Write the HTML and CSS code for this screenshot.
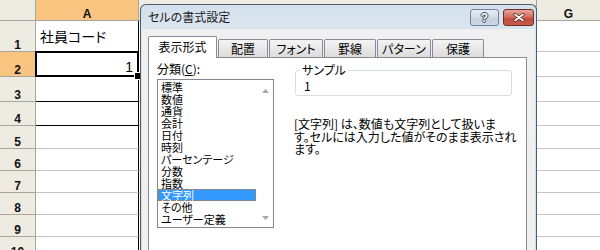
FILE: index.html
```html
<!DOCTYPE html>
<html lang="ja">
<head>
<meta charset="utf-8">
<title>セルの書式設定</title>
<link rel="stylesheet" href="styles.css">
</head>
<body>
<div class="screen">
  <div class="sheet">
    <div class="hdr corner"></div>
    <div class="hdr sel">A</div>
    <div class="hdr"></div>
    <div class="hdr">G</div>

    <div class="hdr">1</div>
    <div class="cell a boxed jp">社員コード</div>
    <div class="cell"></div>
    <div class="cell"></div>

    <div class="hdr sel">2</div>
    <div class="cell a boxed num active">1</div>
    <div class="cell"></div>
    <div class="cell"></div>

    <div class="hdr">3</div>
    <div class="cell a boxed"></div>
    <div class="cell"></div>
    <div class="cell"></div>

    <div class="hdr">4</div>
    <div class="cell a boxed"></div>
    <div class="cell"></div>
    <div class="cell"></div>

    <div class="hdr">5</div>
    <div class="cell a"></div>
    <div class="cell"></div>
    <div class="cell"></div>

    <div class="hdr">6</div>
    <div class="cell a"></div>
    <div class="cell"></div>
    <div class="cell"></div>

    <div class="hdr">7</div>
    <div class="cell a"></div>
    <div class="cell"></div>
    <div class="cell"></div>

    <div class="hdr">8</div>
    <div class="cell a"></div>
    <div class="cell"></div>
    <div class="cell"></div>

    <div class="hdr">9</div>
    <div class="cell a"></div>
    <div class="cell"></div>
    <div class="cell"></div>

    <div class="hdr">10</div>
    <div class="cell a"></div>
    <div class="cell"></div>
    <div class="cell"></div>
  </div>

  <div class="dialog">
    <div class="titlebar">
      <span class="title">セルの書式設定</span>
      <div class="tbtns">
        <span class="tbtn help">?</span>
        <span class="tbtn close">
          <svg width="12" height="9" viewBox="0 0 12 9">
            <path d="M2 1.5 L10 7.5 M10 1.5 L2 7.5" stroke="#5a2a24" stroke-width="3.2" stroke-linecap="round" fill="none"/>
            <path d="M2 1.5 L10 7.5 M10 1.5 L2 7.5" stroke="#ffffff" stroke-width="1.6" stroke-linecap="round" fill="none"/>
          </svg>
        </span>
      </div>
    </div>
    <div class="dbody">
      <div class="tabs">
        <span class="tab active w-a">表示形式</span>
        <span class="tab w-b">配置</span>
        <span class="tab w-c">フォント</span>
        <span class="tab w-d">罫線</span>
        <span class="tab w-c">パターン</span>
        <span class="tab w-d">保護</span>
      </div>
      <div class="panel">
        <div class="leftcol">
          <div class="lbl">分類(<u>C</u>):</div>
          <div class="listbox">
            <ul class="items">
              <li>標準</li>
              <li>数値</li>
              <li>通貨</li>
              <li>会計</li>
              <li>日付</li>
              <li>時刻</li>
              <li>パーセンテージ</li>
              <li>分数</li>
              <li>指数</li>
              <li class="selected">文字列</li>
              <li>その他</li>
              <li>ユーザー定義</li>
            </ul>
            <div class="vscroll">
              <svg width="7" height="4" viewBox="0 0 7 4"><polygon points="0,4 7,4 3.5,0" fill="#a8a8a8"/></svg>
              <svg width="7" height="4" viewBox="0 0 7 4"><polygon points="0,0 7,0 3.5,4" fill="#a8a8a8"/></svg>
            </div>
          </div>
        </div>
        <div class="rightcol">
          <fieldset class="sample">
            <legend>サンプル</legend>
            <div class="sval">1</div>
          </fieldset>
          <p class="desc">[文字列] は、数値も文字列として扱いま<br>す。セルには入力した値がそのまま表示され<br>ます。</p>
        </div>
      </div>
    </div>
  </div>
</div>
</body>
</html>
```

FILE: styles.css
```css
* { box-sizing: border-box; }
html, body { margin: 0; padding: 0; }
body {
  width: 600px;
  height: 250px;
  overflow: hidden;
  background: #ffffff;
  font-family: "Noto Sans CJK JP", sans-serif;
}
.screen {
  position: relative;
  width: 600px;
  height: 250px;
  overflow: hidden;
}

/* ---------- spreadsheet ---------- */
.sheet {
  display: grid;
  grid-template-columns: 36px 103px 398px 64px;
  grid-template-rows: 21px 31px 25px 25px 24px 23px 22px 22px 22px 22px 22px;
}
.hdr {
  background: #eeebe2;
  border-right: 1px solid #a9a79c;
  border-bottom: 1px solid #a9a79c;
  display: flex;
  align-items: flex-end;
  justify-content: center;
  font: bold 12px/12px "Liberation Sans", sans-serif;
  color: #111;
}
.hdr.sel { background: #f8c480; }
.cell {
  border-right: 1px solid #c4c4c4;
  border-bottom: 1px solid #c4c4c4;
  display: flex;
  align-items: center;
  padding: 0 4px;
  color: #000;
}
.cell.a { border-right-color: #000; }
.cell.boxed { border-bottom-color: #000; }
.cell.jp {
  font: 14px/14px "Noto Sans CJK JP", sans-serif;
  font-feature-settings: "palt";
}
.cell.num {
  justify-content: flex-end;
  align-items: flex-end;
  font: 14px/14px "Liberation Sans", sans-serif;
  padding: 0 5px 2px 4px;
}
.cell.active { position: relative; }
.cell.active::after {
  content: "";
  position: absolute;
  left: -1px;
  top: -1px;
  right: -1px;
  bottom: -1px;
  border: 2px solid #000;
}
.cell.active::before {
  content: "";
  position: absolute;
  right: -4px;
  bottom: -4px;
  width: 6px;
  height: 6px;
  background: #000;
  border: 1px solid #fff;
  z-index: 1;
}

/* ---------- dialog ---------- */
.dialog {
  position: absolute;
  left: 140px;
  top: 4px;
  width: 397px;
  height: 262px;
  border: 1px solid #4e5b69;
  border-bottom: none;
  border-radius: 6px 6px 0 0;
  background: linear-gradient(#d4e0ed, #dbe5f0 24px, #cfdbe8);
  padding: 0 1px;
  display: flex;
  flex-direction: column;
  font: 12px/14px "Noto Sans CJK JP", sans-serif;
  font-feature-settings: "palt";
  color: #000;
  z-index: 2;
}
.titlebar {
  height: 24px;
  flex: none;
  display: flex;
  justify-content: space-between;
  align-items: flex-start;
  padding: 4px 1px 0 6px;
}
.title {
  margin-top: 1px;
  color: #1a1a1a;
}
.tbtns {
  display: flex;
  gap: 4px;
}
.tbtn {
  height: 17px;
  border-radius: 3px;
  display: flex;
  align-items: center;
  justify-content: center;
}
.tbtn.help {
  width: 29px;
  border: 1px solid #6f8196;
  background: linear-gradient(#e6edf5, #d2dde9 50%, #c3d1e0 51%, #cbd8e6);
  color: #fff;
  font: bold 12px/12px "Liberation Sans", sans-serif;
  text-shadow: 0 0 1px #3b4a5c, 1px 0 0 #3b4a5c, -1px 0 0 #3b4a5c, 0 1px 0 #3b4a5c, 0 -1px 0 #3b4a5c;
}
.tbtn.close {
  width: 31px;
  border: 1px solid #6d2c25;
  background: linear-gradient(#e5a89e, #d0685c 50%, #c24a3c 51%, #c95a48);
}

.dbody {
  flex: 1;
  display: flex;
  flex-direction: column;
  background: #f0f0f0;
  padding: 7px 8px 0 6px;
}
.tabs {
  display: flex;
  align-items: flex-end;
  gap: 1px;
  height: 21px;
  flex: none;
}
.tab {
  height: 18px;
  border: 1px solid #898c95;
  border-bottom: none;
  border-radius: 2px 2px 0 0;
  background: linear-gradient(#f4f4f4, #e8e8e8 50%, #dcdcdc);
  display: flex;
  justify-content: center;
  padding-top: 2px;
  white-space: nowrap;
}
.tab.active {
  height: 22px;
  margin-bottom: -1px;
  background: #ffffff;
  position: relative;
  z-index: 1;
  padding-top: 3px;
}
.w-a { width: 69px; }
.w-b { width: 50px; }
.w-c { width: 54px; }
.w-d { width: 52px; }

.panel {
  flex: 1;
  background: #ffffff;
  border: 1px solid #898c95;
  padding: 4px 8px 0 8px;
  display: grid;
  grid-template-columns: 117px 217px;
  column-gap: 21px;
  align-items: start;
  align-content: start;
}
.lbl {
  height: 14px;
  margin-bottom: 3px;
}
.listbox {
  height: 149px;
  border: 1px solid #828790;
  display: flex;
  background: #fff;
}
.items {
  list-style: none;
  margin: 0;
  padding: 1px 0 0 0;
  width: 98px;
}
.items li {
  height: 12px;
  font-size: 11px;
  line-height: 12px;
  padding-left: 3px;
  white-space: nowrap;
}
.items li.selected {
  background: #3399ff;
  color: #ffffff;
  outline: 1px dotted #c8762a;
  outline-offset: -1px;
}
.vscroll {
  width: 17px;
  display: flex;
  flex-direction: column;
  justify-content: space-between;
  align-items: center;
  padding: 9px 0 7px 1px;
}
.vscroll svg { display: block; }

.rightcol { margin-top: 1px; }
.sample {
  margin: 0;
  width: 217px;
  min-width: 0;
  border: 1px solid #d5dfe5;
  border-radius: 3px;
  padding: 2px 8px 2px 8px;
}
.sample legend {
  padding: 0 2px;
  margin-left: -4px;
  line-height: 14px;
}
.sval { line-height: 14px; }
.desc {
  margin: 22px 0 0 -1px;
  line-height: 12.5px;
  white-space: nowrap;
}
```
